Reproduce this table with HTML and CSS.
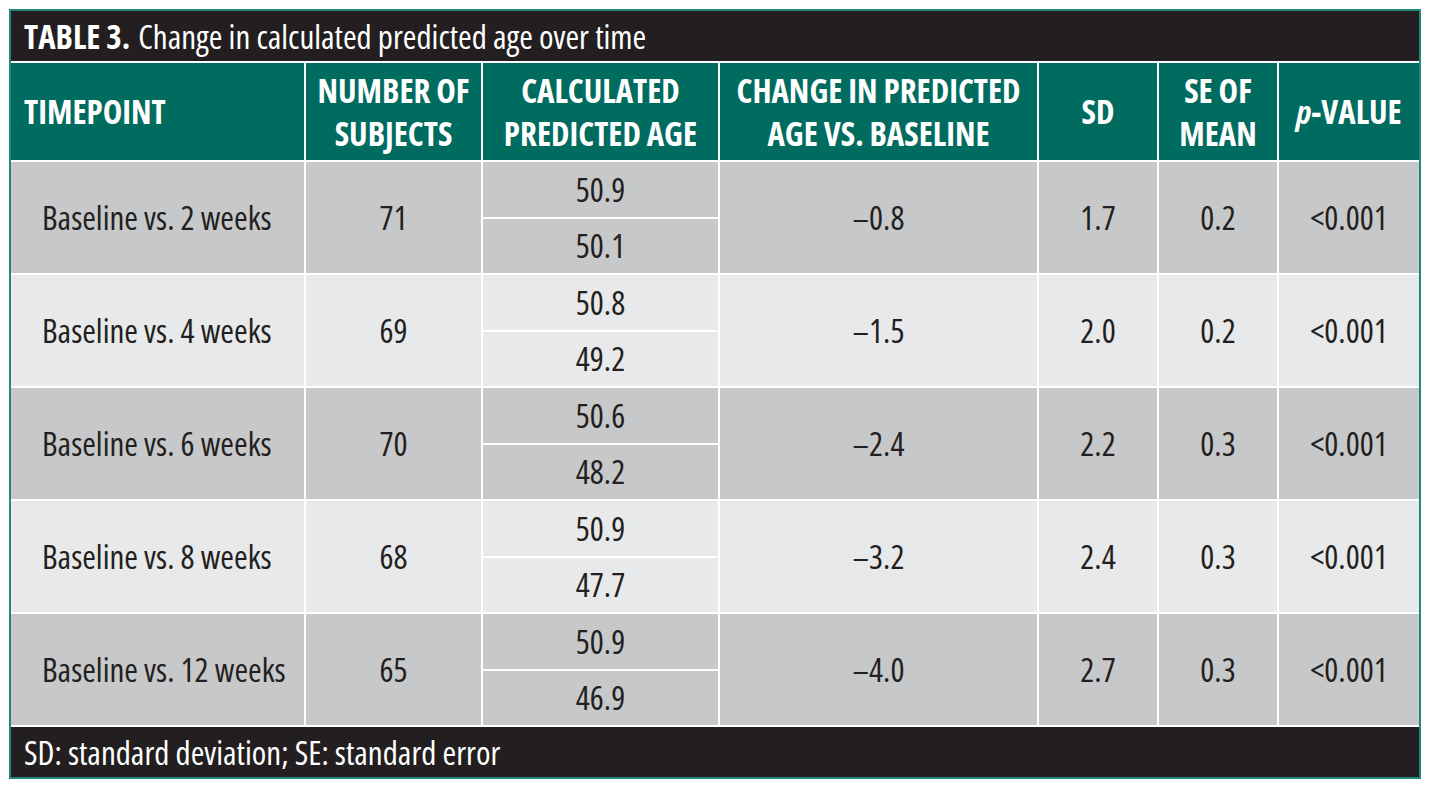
FILE: index.html
```html
<!DOCTYPE html>
<html lang="en">
<head>
<meta charset="utf-8">
<title>Table 3</title>
<link rel="stylesheet" href="styles.css">
</head>
<body>
<div class="tbl">
  <div class="title"><b>TABLE 3.</b> Change in calculated predicted age over time</div>

  <div class="th th-left">TIMEPOINT</div>
  <div class="th">NUMBER OF<br>SUBJECTS</div>
  <div class="th">CALCULATED<br>PREDICTED AGE</div>
  <div class="th">CHANGE IN PREDICTED<br>AGE VS. BASELINE</div>
  <div class="th">SD</div>
  <div class="th">SE OF<br>MEAN</div>
  <div class="th"><i>p</i>-VALUE</div>

  <div class="td name odd">Baseline vs. 2 weeks</div>
  <div class="td odd">71</div>
  <div class="split"><div class="td odd">50.9</div><div class="td odd">50.1</div></div>
  <div class="td odd">–0.8</div>
  <div class="td odd">1.7</div>
  <div class="td odd">0.2</div>
  <div class="td odd">&lt;0.001</div>

  <div class="td name even">Baseline vs. 4 weeks</div>
  <div class="td even">69</div>
  <div class="split"><div class="td even">50.8</div><div class="td even">49.2</div></div>
  <div class="td even">–1.5</div>
  <div class="td even">2.0</div>
  <div class="td even">0.2</div>
  <div class="td even">&lt;0.001</div>

  <div class="td name odd">Baseline vs. 6 weeks</div>
  <div class="td odd">70</div>
  <div class="split"><div class="td odd">50.6</div><div class="td odd">48.2</div></div>
  <div class="td odd">–2.4</div>
  <div class="td odd">2.2</div>
  <div class="td odd">0.3</div>
  <div class="td odd">&lt;0.001</div>

  <div class="td name even">Baseline vs. 8 weeks</div>
  <div class="td even">68</div>
  <div class="split"><div class="td even">50.9</div><div class="td even">47.7</div></div>
  <div class="td even">–3.2</div>
  <div class="td even">2.4</div>
  <div class="td even">0.3</div>
  <div class="td even">&lt;0.001</div>

  <div class="td name odd">Baseline vs. 12 weeks</div>
  <div class="td odd">65</div>
  <div class="split"><div class="td odd">50.9</div><div class="td odd">46.9</div></div>
  <div class="td odd">–4.0</div>
  <div class="td odd">2.7</div>
  <div class="td odd">0.3</div>
  <div class="td odd">&lt;0.001</div>

  <div class="foot">SD: standard deviation; SE: standard error</div>
</div>
</body>
</html>
```

FILE: styles.css
```css
html, body {
  margin: 0;
  padding: 0;
  background: #ffffff;
}

body {
  font-family: "Open Sans", "Noto Sans", sans-serif;
  font-stretch: 75%;
  color: #231f20;
}

.tbl {
  margin: 9px 0 0 9px;
  display: grid;
  width: max-content;
  grid-template-columns: 293px 175px 235px 317px 118px 118px 140px;
  grid-template-rows: 50px 97px repeat(5, 111px) 50px;
  gap: 2px;
  background: #ffffff;
  border: 2px solid #23887c;
}

.title,
.foot {
  grid-column: 1 / -1;
  background: #231f20;
  color: #ffffff;
  font-size: 33px;
  white-space: nowrap;
  display: flex;
  align-items: center;
  padding-left: 13px;
}

.title b {
  font-weight: 700;
  margin-right: 8px;
}

.th {
  background: #006b5f;
  color: #ffffff;
  font-weight: 700;
  font-size: 33px;
  line-height: 43px;
  white-space: nowrap;
  display: flex;
  align-items: center;
  justify-content: center;
  text-align: center;
}

.th-left {
  justify-content: flex-start;
  text-align: left;
  padding-left: 13px;
}

.td {
  font-size: 33px;
  white-space: nowrap;
  display: flex;
  align-items: center;
  justify-content: center;
}

.td.name {
  justify-content: flex-start;
  padding-left: 31px;
}

.odd {
  background: #c7c8ca;
}

.even {
  background: #e8e9ea;
}

.split {
  display: grid;
  grid-template-rows: 1fr 1fr;
  gap: 2px;
  background: #ffffff;
}
```
